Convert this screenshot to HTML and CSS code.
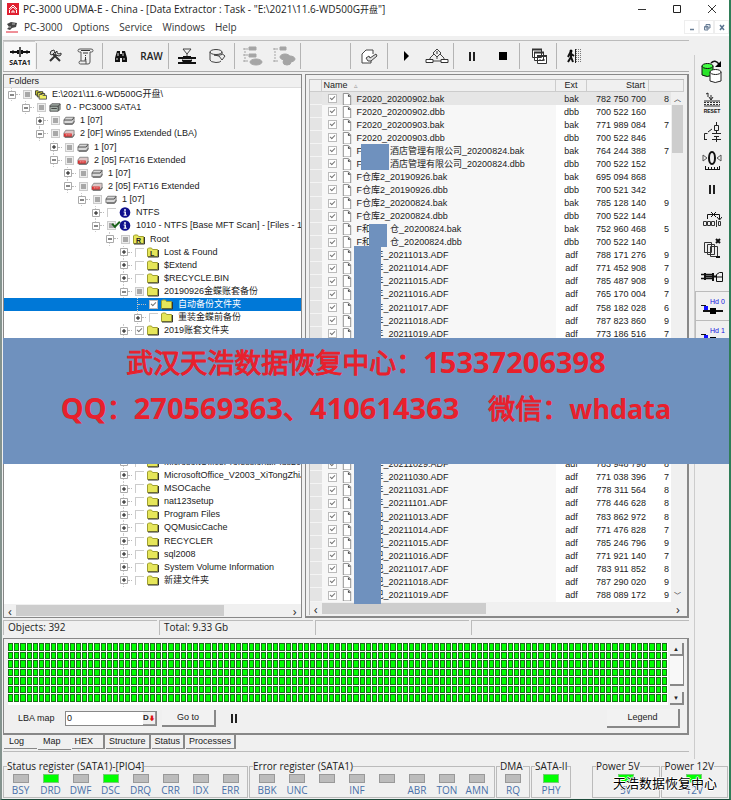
FILE: index.html
```html
<!DOCTYPE html>
<html lang="zh-CN">
<head>
<meta charset="utf-8">
<title>PC-3000 UDMA-E</title>
<link rel="stylesheet" href="styles.css">
</head>
<body>
<svg class="defs" aria-hidden="true">
  <symbol id="i-drive" viewBox="0 0 13 9"><path d="M1 4 3 1h9v4l-2 3H1z" fill="#d8d8d8" stroke="#777"/><path d="M1 4h9l2-3M2 8.5h8.5l2-3" fill="none" stroke="#444"/></symbol>
  <symbol id="i-disk" viewBox="0 0 13 10"><path d="M1 3 3 1h9v6l-2 2H1z" fill="#a9b5ad" stroke="#555"/><path d="M1 3.5h9v5M10 3.5l2-2M2.500 6h6" fill="none" stroke="#333"/></symbol>
  <symbol id="i-ext" viewBox="0 0 13 9"><path d="M1 4 3 1h9v4l-2 3H1z" fill="#dcc8c8" stroke="#888"/><path d="M1 4.500h8.500V8H1z" fill="#d83030"/><path d="M3 6h1m1 0h1m1 0h1" stroke="#fff"/><path d="M2 8.500h8.500l2-3" fill="none" stroke="#444"/></symbol>
  <symbol id="i-folder" viewBox="0 0 12 10"><path d="M.5 9V1.500L1.500.5h3l1 1.500h5V9z" fill="#e6e65a" stroke="#a0a030"/><path d="M1 9.500h10.500V2.500" fill="none" stroke="#333"/></symbol>
  <symbol id="i-stack" viewBox="0 0 13 11"><path d="M.5 6V1.500h3l1 1h4V7z" fill="#d8d830" stroke="#333"/><path d="M2.500 8V3.500h3l1 1h4V9z" fill="#e6e64a" stroke="#333"/><path d="M4.500 10.500V5.500h3l1 1h4v4z" fill="#f0f060" stroke="#555"/></symbol>
  <symbol id="i-info" viewBox="0 0 12 12"><circle cx="6" cy="6" r="5.800" fill="#10108c"/><path d="M5 2.500h2v1.500H5zM4.500 5H7v3.500h1v1H4.500v-1h1V6h-1z" fill="#fff"/></symbol>
  <symbol id="i-doc" viewBox="0 0 10 13"><path d="M1 .5h5.500L9 3v10H1z" fill="#fff" stroke="#888"/><path d="M6 1v3h3z" fill="#444"/></symbol>
</svg>
<div class="app">
  <header class="titlebar">
    <svg class="logo" viewBox="0 0 12 12"><path d="M0 0h12v12H0z" fill="#e02030"/><path d="M2 6 6 2l4 4M2.500 10V7L6 4l3.500 3v3M5 10V8h2v2" fill="none" stroke="#fff"/></svg>
    <h1>PC-3000 UDMA-E - China - [Data Extractor : Task - "E:\2021\11.6-WD500G<span class="cjk10">开盘</span>"]</h1>
    <div class="winbtns">
      <button aria-label="Minimize"><svg viewBox="0 0 10 10"><path d="M1 5.500h8" stroke="#333" fill="none"/></svg></button>
      <button aria-label="Maximize"><svg viewBox="0 0 10 10"><path d="M1.500 1.500h7v7h-7z" stroke="#222" fill="none"/></svg></button>
      <button aria-label="Close"><svg viewBox="0 0 10 10"><path d="M1 1l8 8M9 1 1 9" stroke="#333" fill="none"/></svg></button>
    </div>
  </header>
  <nav class="menubar">
    <svg class="logo" viewBox="0 0 12 12"><path d="M1 3 5 1l6 1-1 4-4 1-2 2-3-1 2-2z" fill="#444"/><path d="M6 3h3M3 6h2" stroke="#bbb"/><path d="M0 11h12" stroke="#e02030"/></svg>
    <a href="#">PC-3000</a><a href="#">Options</a><a href="#">Service</a><a href="#">Windows</a><a href="#">Help</a>
    <div class="mdibtns">
      <button aria-label="Minimize child"><svg viewBox="0 0 8 8"><path d="M2 6.500h4" stroke="#6a7f96" stroke-width="1.500"/></svg></button>
      <button aria-label="Restore child"><svg viewBox="0 0 8 8"><path d="M3 1.500h4V5H3zM1.500 3.500H5V7H1.500z" fill="#dde5ee" stroke="#6a7f96"/></svg></button>
      <button aria-label="Close child"><svg viewBox="0 0 8 8"><path d="M2 2l4 5M6 2 2 7" stroke="#5a7390" stroke-width="1.500"/></svg></button>
    </div>
  </nav>

  <div class="body">
    <main class="main">
      <div class="toolbar">
        <button class="tool pressed" aria-label="SATA1"><svg width="24" height="20" viewBox="0 0 24 20"><path d="M2 5h20" stroke="#111" stroke-width="2"/><path d="M5 3v4M19 3v4M9 3.500h6M9 6.500h6" stroke="#111"/><path d="M12 0v10" stroke="#555" stroke-width="2"/><text x="12" y="18" class="ico-sata">SATA1</text></svg></button>
        <i class="sep"></i>
        <button class="tool" aria-label="Tools"><svg width="14" height="14" viewBox="0 0 14 14"><path d="M2 12 9 5M12 12 5 5" stroke="#333" stroke-width="2"/><path d="M2 5l1-3 3-1 1 2-3 3zM9 2v2l2 1 2-1v2l-2 1-3-1-1-2z" fill="#ddd" stroke="#333"/></svg></button>
        <button class="tool" aria-label="Script"><svg width="17" height="17" viewBox="0 0 17 17"><path d="M4 4H2.500Q1 4 1 2.500T3 1h11q2 0 2 1.500T14.500 4H13v10q0 2-2 2H3.500Q2 16 2 14.500T3.500 13H4V4zM4 13h5v3" fill="none" stroke="#555"/><path d="M4 2.500h9M6 5h5M8.500 7v1m0 1v3m-1 0h2" stroke="#333"/></svg></button>
        <i class="sep"></i>
        <button class="tool" aria-label="Find"><svg width="14" height="13" viewBox="0 0 14 13"><path d="M3 1h3v3h2V1h3l2 7v4H8V8H6v4H1V8z" fill="#111"/><path d="M4 3v3M9 3v3M3 8v2M10 8v2" stroke="#ddd"/></svg></button>
        <button class="tool raw">RAW</button>
        <i class="sep"></i>
        <button class="tool" aria-label="Connect"><svg width="18" height="16" viewBox="0 0 18 16"><path d="M5 1h8L9 6zM9 6v3" fill="none" stroke="#444"/><path d="M0 10h18M4 12.500h10M0 15h18" stroke="#111" stroke-width="2"/><path d="M5 8h8v8H5z" fill="#111"/><path d="M5 11.500h8" stroke="#ccc"/></svg></button>
        <button class="tool" aria-label="Save disk"><svg width="17" height="14" viewBox="0 0 17 14"><ellipse cx="7" cy="3" rx="6" ry="2.500" fill="none" stroke="#444"/><path d="M1 3v8q0 2 6 2.500 4 0 5-1.500M13 3v2" fill="none" stroke="#444"/><path d="M5 6h6q3-2 5 1l-3 4-3-4z" fill="#eee" stroke="#444"/></svg></button>
        <i class="sep"></i>
        <button class="tool" aria-label="Tree"><svg width="21" height="20" viewBox="0 0 21 20"><g fill="#a5a5a5" stroke="#a5a5a5"><path d="M3 2v14M1 3h5M1 9h5M1 15h6" stroke-dasharray="2 1"/><path d="M7 1h7v3H7zM7 8h7v3H7z"/><ellipse cx="14" cy="16" rx="6" ry="3"/></g></svg></button>
        <button class="tool" aria-label="Tree groups"><svg width="24" height="20" viewBox="0 0 24 20"><g fill="#a5a5a5" stroke="#a5a5a5"><path d="M3 2v14M1 3h6M1 15h6" stroke-dasharray="2 1"/><path d="M8 1h6v3H8z"/><ellipse cx="13" cy="11" rx="5" ry="3"/><ellipse cx="18" cy="13" rx="5" ry="3"/><ellipse cx="15" cy="16" rx="4" ry="3"/></g></svg></button>
        <i class="sep"></i>
        <span class="gap"></span>
        <i class="sep"></i>
        <button class="tool single" aria-label="Check page"><svg width="17" height="15" viewBox="0 0 17 15"><path d="M10 11v3H1V5l4-4h7v4" fill="#fff" stroke="#444"/><path d="M5 9l3-2 1 2 6-4 1 2-6 5H7z" fill="#ddd" stroke="#444"/></svg></button>
        <i class="sep"></i>
        <button class="tool" aria-label="Run"><svg width="6" height="10" viewBox="0 0 6 10"><path d="M1 0 6 5 1 10z" fill="#000"/></svg></button>
        <button class="tool" aria-label="Flow"><svg width="24" height="16" viewBox="0 0 24 16"><path d="M12 1l4 4-4 4-4-4zM12 9v2M9 6l-4 4M15 6l4 4M5 10v2M19 10v2M8 13h8" fill="none" stroke="#444"/><path d="M1 11.500h7v3H1zM16 11.500h7v3h-7z" fill="#fff" stroke="#333"/><path d="M12 3v3" stroke="#333"/></svg></button>
        <i class="sep"></i>
        <button class="tool" aria-label="Pause"><svg width="8" height="9" viewBox="0 0 8 9"><path d="M1 0h2v9H1zM5 0h2v9H5z" fill="#222"/></svg></button>
        <button class="tool" aria-label="Stop"><svg width="8" height="8" viewBox="0 0 8 8"><path d="M0 0h8v8H0z" fill="#000"/></svg></button>
        <i class="sep"></i>
        <button class="tool single" aria-label="Windows"><svg width="16" height="16" viewBox="0 0 16 16"><g fill="#fff" stroke="#333"><path d="M1.500 1.500h9v8h-9zM3.500 4.500h9v8h-9zM6.500 7.500h9v8h-9z"/><path d="M1 1.500h10M3 4.500h10M6 8h10" stroke-width="2"/><path d="M8 12h2m1 0h3"/></g></svg></button>
        <i class="sep"></i>
        <button class="tool" aria-label="Exit"><svg width="15" height="14" viewBox="0 0 15 14"><circle cx="4" cy="2" r="1.500"/><path d="M4 3v5l2 5M4 8l-3 5M1 8l2-4 4 3" fill="none" stroke="#111" stroke-width="2"/><path d="M9.500 0v14M11.500 0v14M13.500 0v14" stroke="#777" stroke-dasharray="1 1"/><path d="M8.500 0v14" stroke="#222"/></svg></button>
      </div>

      <div class="panels">
        <section class="folders">
          <h2>Folders</h2>
          <div class="tree" id="tree"></div>
          <div class="hbar"><b>‹</b><i class="thumb-tree"></i><b>›</b></div>
        </section>
        <section class="files">
          <div class="files-inner">
            <div class="files-view">
              <table>
                <colgroup><col class="c-gut"><col class="c-name"><col class="c-ext"><col class="c-start"><col class="c-more"></colgroup>
                <thead><tr><th></th><th class="h-name">Name <span class="sort">▵</span></th><th>Ext</th><th class="num">Start</th><th></th></tr></thead>
                <tbody id="rows"></tbody>
              </table>
              <div class="vbar"><b>︿</b><i></i><b>﹀</b></div>
              <div class="mask mask-a"></div><div class="mask mask-b"></div><div class="mask mask-c"></div>
            </div>
            <div class="hbar"><b>‹</b><i class="thumb-files"></i><b>›</b></div>
          </div>
        </section>
      </div>

      <div class="statusbar"><span class="s1">Objects: 392</span><span class="s2">Total: 9.33 Gb</span><span class="s3"></span><span class="s4"></span></div>

      <section class="map">
        <div class="map-top">
          <div class="cells" id="cells"></div>
          <div class="classic"><button aria-label="Up">▲</button><i></i><button aria-label="Down">▼</button></div>
        </div>
        <div class="map-controls">
          <label for="lba">LBA map</label>
          <div class="lba"><input id="lba" type="text" value="0"><button aria-label="Decimal"><b>D</b><em>⬇</em></button></div>
          <button class="btn goto">Go to</button>
          <svg width="6" height="9" viewBox="0 0 6 9"><path d="M0 0h2v9H0zM4 0h2v9H4z" fill="#222"/></svg>
          <button class="btn legend">Legend</button>
        </div>
      </section>
      <div class="tabs"><button>Log</button><button class="on">Map</button><button>HEX</button><button>Structure</button><button>Status</button><button>Processes</button></div>
      <div class="footline"></div>
    </main>

    <aside class="side">
      <button aria-label="Copy disk"><svg width="22" height="26" viewBox="0 0 22 26"><path d="M1 7v9q5 3 11 0V7" fill="#28e428" stroke="#111"/><ellipse cx="6.500" cy="7" rx="5.500" ry="2.500" fill="#4f4" stroke="#111"/><path d="M9 13v9q5 3 11 0v-9" fill="#fff" stroke="#222"/><ellipse cx="14.500" cy="13" rx="5.500" ry="2.500" fill="#fff" stroke="#222"/><path d="M10 4q4-4 8 1" fill="none" stroke="#111" stroke-width="1.500"/><path d="M20 2v6h-6z"/></svg></button>
      <button aria-label="Reset"><svg width="18" height="22" viewBox="0 0 18 22"><path d="M3 2l2-1v4M8 3v4M6 5l2 3 2-3" fill="none" stroke="#222"/><path d="M1 9h16M1 14h16" stroke="#333"/><path d="M1 10.500h16M1 12.500h16" stroke="#333" stroke-dasharray="2 1"/><text x="9" y="21" class="ico-reset">RESET</text></svg></button>
      <button aria-label="Power switch"><svg width="18" height="20" viewBox="0 0 18 20"><path d="M1.500 18v-6.500h3M5 10l4-3M13.500 0v3M11.500 3.500h4v5h-4zM13.500 9v2M9 11.500h9M11 14.500h5M9 17.500h9M13.500 15v5M1 17.500h3" fill="none" stroke="#222"/></svg></button>
      <button aria-label="Zero"><svg width="20" height="22" viewBox="0 0 20 22"><ellipse cx="10" cy="8" rx="3" ry="6" fill="none" stroke="#111" stroke-width="2"/><path d="M1 5l4 3-4 3zM19 5l-4 3 4 3z" fill="none" stroke="#555"/><path d="M3 19.500h15M3.500 16v4M6.500 17v3M9.500 17v3M12.500 17v3M15.500 17v3M17.500 16v4" stroke="#111"/></svg></button>
      <button aria-label="Pause device"><svg width="6" height="9" viewBox="0 0 6 9"><path d="M0 0h2v9H0zM4 0h2v9H4z" fill="#222"/></svg></button>
      <button aria-label="Skip sector"><svg width="20" height="16" viewBox="0 0 20 16"><path d="M5.500 8V3.500h12V8M15 6l2.500 3L20 6M9 1l5 5M14 1 9 6" fill="none" stroke="#111"/><path d="M1.500 10.500h3v4h-3zM5.500 10.500h3v4h-3zM9.500 10.500h3v4h-3zM14.500 9v7M16.500 10.500h2v4h-2z" fill="none" stroke="#333"/></svg></button>
      <button aria-label="Close copies"><svg width="18" height="20" viewBox="0 0 18 20"><g fill="#eee" stroke="#333"><path d="M1.500 4.500h7v10h-7zM4.500 6.500h7v10h-7zM7.500 8.500h7v10h-7z"/></g><path d="M13 1l4 4M17 1l-4 4M13 19h4" stroke="#111" stroke-width="2"/></svg></button>
      <button aria-label="Connector"><svg width="22" height="11" viewBox="0 0 22 11"><path d="M0 3.500h12M0 7.500h12" stroke="#111" stroke-width="1.500"/><path d="M3 5.500h12" stroke="#111" stroke-width="2"/><path d="M4 2v7M12 2v8" stroke="#111" stroke-width="2"/><path d="M15.500 3.500l3-2h3v9h-6zM16 6h5" fill="none" stroke="#111"/></svg></button>
      <button class="head" aria-label="Head 0"><svg width="24" height="18" viewBox="0 0 24 18"><text x="9" y="7" class="ico-hd">Hd 0</text><path d="M3 9h4v4H3z" fill="#11f"/><path d="M0 8.500h5" stroke="#111"/><path d="M2 14h20" stroke="#111" stroke-width="2"/><path d="M9 11h6v6H9z"/></svg></button>
      <button class="head" aria-label="Head 1"><svg width="24" height="18" viewBox="0 0 24 18"><text x="9" y="7" class="ico-hd">Hd 1</text><path d="M3 9h4v4H3z" fill="#11f"/><path d="M0 8.500h5" stroke="#111"/><path d="M2 14h20" stroke="#111" stroke-width="2"/><path d="M9 11h6v6H9z"/></svg></button>
    </aside>
  </div>

  <footer class="registers" id="registers"></footer>

  <div class="banner">
    <p>武汉天浩数据恢复中心：<span>15337206398</span></p>
    <p><span>QQ</span>：<span>270569363</span>、<span>410614363</span><i></i>微信：<span class="id">whdata</span></p>
  </div>
  <div class="watermark">天浩数据恢复中心</div>
</div>
<script src="app.js"></script>
</body>
</html>
```
FILE: styles.css
```css
* { box-sizing: border-box; }
body { margin: 0; font: 9px/13px "Liberation Sans", "Noto Sans CJK SC", sans-serif; color: #222; }
button, input { font: inherit; color: inherit; margin: 0; padding: 0; border: 0; background: none; border-radius: 0; }
p, h1, h2 { margin: 0; font-weight: 400; font-size: inherit; }
.defs { display: none; }
svg { display: block; flex: none; }
.cjk { font: 9px/12px "Noto Sans CJK SC", sans-serif; }
.cjk10 { font-size: 9px; }

.app { position: relative; display: flex; flex-direction: column; height: 100vh; min-height: 780px; background: #f0f0f0; border-left: 2px solid #84938e; border-right: 2px solid #2f7d57; border-bottom: 1px solid #1d4a3a; overflow: hidden; }
.titlebar, .menubar, .statusbar, .registers { font-family: "Open Sans", "Noto Sans CJK SC", sans-serif; font-size: 10px; }
.titlebar { display: flex; align-items: center; height: 18px; padding-left: 5px; background: #fff; }
.titlebar h1 { margin-left: 4px; white-space: nowrap; }
.logo { width: 12px; height: 12px; }
.winbtns { display: flex; gap: 25px; margin-left: auto; padding-right: 12px; }
.winbtns svg { width: 10px; height: 10px; }
.menubar { display: flex; align-items: center; height: 18px; padding-left: 4px; background: #fff; }
.menubar a { margin: 0 0 0 10px; color: #333; text-decoration: none; }
.menubar .logo + a { margin-left: 6px; }
.mdibtns { display: flex; margin-left: auto; }
.mdibtns button { width: 15px; height: 14px; display: grid; place-items: center; border: 1px solid #eee; }
.mdibtns svg { width: 8px; height: 8px; }

.body { flex: 1; display: flex; min-height: 0; }
.main { flex: 1; min-width: 0; display: flex; flex-direction: column; padding: 4px 0 0 1px; }
.toolbar { display: flex; height: 32px; border-top: 1px solid #bbb; border-bottom: 1px solid #aaa; }
.tool { display: grid; place-items: center; width: 31px; }
.tool.single { width: 33px; }
.tool.pressed { width: 32px; background: #f8f8f8; border: 1px solid #ccc; border-width: 1px 0 0 1px; }
.sep { width: 1px; margin: 2px 2px 2px 1px; background: #b4b4b4; }
.gap { width: 46px; }
.raw { font: 600 10px/13px "Open Sans", sans-serif; }
.ico-sata { font: 700 7px "Open Sans", sans-serif; text-anchor: middle; fill: #222; }
.ico-reset { font: 700 5px "Liberation Sans", sans-serif; text-anchor: middle; fill: #111; }
.ico-hd { font: 7px "Liberation Sans", sans-serif; fill: #11d; }

.panels { flex: 1; display: flex; gap: 3px; min-height: 0; padding-top: 2px; }
.folders { flex: 79 1 0; min-width: 0; display: flex; flex-direction: column; padding: 0; border: 1px solid #888; }
.folders h2 { height: 13px; padding-left: 5px; border-bottom: 1px solid #ddd; }
.tree { flex: 1; min-height: 0; display: grid; grid-auto-rows: 1fr; padding-bottom: 17px; background: #fff; overflow: hidden; }
.row { display: flex; align-items: center; min-height: 0; white-space: nowrap; padding-left: 4px; }
.row.sel { background: #0078d7; color: #fff; }
.indent { flex: none; align-self: stretch; }
.exp { position: relative; flex: none; width: 15px; align-self: stretch; display: flex; align-items: center; }
.exp::before { content: ""; position: absolute; left: 3px; top: 0; bottom: 0; border-left: 1px dotted #ccc; }
.exp::after { content: ""; position: absolute; left: 8px; right: 3px; top: 6px; border-top: 1px dotted #bbb; }
.exp svg { position: relative; }
.exp.leaf::after { left: 4px; }
.chk { flex: none; width: 9px; height: 9px; margin: 0; appearance: none; border: 1px solid #ccc; border-width: 1px 0 0 1px; background: #fff; }
.chk.part { border: 1px solid #ccc; background: #a8a8a8; outline: 1px solid #eee; outline-offset: -2px; }
.chk.on { border: 1px solid #bbb; position: relative; }
.chk.on::after, .tick::after { content: ""; position: absolute; left: 1px; top: 1px; width: 4px; height: 2px; border: solid #777; border-width: 0 0 1px 1px; transform: rotate(-45deg); }
.chk.tick { position: relative; overflow: visible; }
.chk.tick::after { left: 4px; top: -1px; width: 6px; height: 3px; border-color: #186018; border-width: 0 0 2px 2px; }
.pic { position: relative; flex: none; width: 13px; margin: 0 4px 0 3px; }
.pic svg { width: 12px; height: 11px; }
.pic b { position: absolute; left: 3px; top: 2px; font: 700 7px/9px "Liberation Sans", sans-serif; }

.hbar { display: flex; align-items: center; height: 13px; background: #f0f0f0; }
.hbar b { flex: none; width: 12px; font: 13px/10px "Open Sans", sans-serif; text-align: center; color: #333; }
.hbar b:last-child { margin-left: auto; }
.hbar i { height: 11px; background: #cdcdcd; }
.thumb-tree { width: 70%; }
.thumb-files { width: 44%; }

.files { flex: 100 1 0; min-width: 0; padding: 4px 3px 1px 3px; border: solid #888; border-width: 1px 2px 2px 1px; }
.files-inner { height: 100%; display: flex; flex-direction: column; border: 1px solid #bbb; border-right: 0; border-bottom: 0; }
.files-view { position: relative; flex: 1; min-height: 0; display: flex; }
table { flex: 1; height: 100%; table-layout: fixed; border-collapse: separate; border-spacing: 0; width: 100%; }
.c-gut { width: 12px; } .c-ext { width: 31px; } .c-start { width: 62px; } .c-more { width: 35px; }
th, td { padding: 0; height: 13px; line-height: 12px; font-weight: 400; text-align: center; white-space: nowrap; overflow: hidden; }
th { height: 12px; line-height: 11px; background: #f0f0f0; border-right: 1px solid #ccc; border-bottom: 1px solid #ccc; }
th.h-name { text-align: left; padding-left: 2px; }
.sort { margin-left: 4px; color: #999; font-size: 7px; }
.num { text-align: right; padding-right: 3px; }
td { background: #fff; }
td:first-child { background: #e4e4e4; border-bottom: 1px solid #f4f4f4; }
td:last-child { text-align: right; padding-right: 15px; }
td .cell { display: flex; align-items: center; height: 12px; padding-left: 6px; }
tbody td:nth-child(2) { background: #f7f7f7; }
tbody tr:first-child td:not(:first-child) { background: #e6e6e6; }
.cell .chk { margin-right: 5px; }
.cell svg { width: 10px; height: 12px; margin-right: 5px; }
.cell u { display: inline-block; }
.u-a { width: 28px; } .u-b { width: 19px; } .u-c { width: 18px; }
.vbar { position: absolute; right: 0; top: 12px; bottom: 0; width: 13px; display: flex; flex-direction: column; background: #f0f0f0; }
.vbar b { height: 13px; font: 7px/13px "Noto Sans CJK SC", sans-serif; text-align: center; }
.vbar i { height: 48px; margin: 0 1px; background: #cdcdcd; }
.vbar b:last-child { margin-top: auto; }
.mask { position: absolute; background: #6f91be; }
.mask-a { left: 51px; top: 64px; width: 28px; height: 26px; }
.mask-b { left: 59px; top: 144px; width: 18px; height: 23px; }
.mask-c { left: 44px; top: 166px; width: 27px; bottom: -2px; z-index: 1; }

.statusbar { display: flex; height: 15px; margin-top: 2px; gap: 2px; line-height: 12px; }
.statusbar span { border: solid #bbb; border-width: 1px 0 0 1px; padding-left: 4px; }
.s1, .s2, .s3 { flex: 154; } .s4 { flex: 220; }

.map { margin-top: 3px; border: solid #888; border-width: 1px 2px 2px 1px; padding: 4px 0 6px 4px; }
.map-top { display: flex; gap: 2px; height: 62px; }
.cells { flex: 1; display: grid; grid-template-columns: repeat(107, 1fr); grid-auto-rows: 1fr; background: #fff; padding-bottom: 2px; }
.cells i { margin: 0 1px 1px 0; background: #0f0; border: 1px solid #177017; }
.classic { width: 14px; display: flex; flex-direction: column; margin-right: 3px; }
.classic button { height: 13px; font-size: 6px; line-height: 10px; background: #f0f0f0; border: solid #888; border-width: 0 2px 2px 0; }
.classic i { flex: 1; margin-bottom: 6px; background: #f8f8f8; border: solid #888; border-width: 0 1px 2px 0; }
.map-controls { display: flex; align-items: center; height: 17px; margin-top: 5px; padding: 0 7px 0 10px; }
.map-controls label { width: 47px; }
.lba { display: flex; width: 92px; height: 15px; border: 1px solid #888; background: #fff; }
.lba input { flex: 1; min-width: 0; padding-left: 1px; }
.lba button { width: 13px; font: 700 8px/11px "Liberation Sans", sans-serif; background: #f0f0f0; border: solid #999; border-width: 0 1px 1px 0; }
.lba em { color: #d11; font-style: normal; font-size: 6px; }
.btn { height: 17px; border: solid #888; border-width: 0 2px 2px 0; background: #f2f2f2; }
.goto { width: 54px; margin: 0 15px 0 5px; }
.legend { width: 73px; height: 19px; margin-left: auto; }
.tabs { display: flex; height: 16px; padding-left: 1px; align-items: flex-start; }
.tabs button { height: 14px; padding: 0 3px; border: solid #888; border-width: 0 2px 1px 0; margin-right: 1px; }
.tabs .on { height: 16px; padding: 0 10px 0 5px; border-right: 0; margin-top: -1px; }
.tabs button:first-child { padding-left: 5px; padding-right: 13px; border-right: 0; }
.tabs button:nth-child(3) { padding-right: 10px; }
.footline { height: 8px; border-top: 1px solid #bbb; }

.side { width: 35px; margin: 19px 0 0 5px; border-left: 1px solid #ccc; display: flex; flex-direction: column; overflow: hidden; }
.side button { display: grid; place-items: center; height: 29px; flex: none; }
.side button:nth-child(1) { height: 33px; }
.side .head { border: solid #bbb; border-width: 1px 0 0 1px; }

.registers { display: flex; padding: 1px 0 1px 1px; }
.registers fieldset { display: flex; flex: none; min-width: 0; height: 38px; margin: 0 1px 0 0; padding: 0; border: 1px solid #bbb; justify-content: center; }
.registers legend { margin-left: 3px; padding: 0; line-height: 12px; height: 12px; white-space: nowrap; }
.w-status { width: 245px; } .w-error { width: 246px; } .w-dma { width: 34px; } .w-sata { width: 40px; }
.registers .w-5, .registers .w-12 { flex: 1; }
.registers .w-5 { margin-left: 20px; }
.led { width: 30px; text-align: center; color: #4a70a8; line-height: 12px; }
.led i { display: block; width: 16px; height: 9px; margin: 2px auto 1px; background: #bcbcbc; border: 1px solid #999; }
.led i.lit { background: #0f0; border-color: #7c7; }

.banner { position: absolute; z-index: 2; left: 1px; right: 0; top: 338px; height: 126px; padding-top: 6px; background: #6f91be; color: #e8202c; font: 700 27px/36px "Noto Sans CJK SC", sans-serif; -webkit-text-stroke: 1px #e8202c; white-space: nowrap; }
.banner p { height: 46px; text-align: center; }
.banner span { font: 700 29px/36px "Noto Sans", sans-serif; -webkit-text-stroke: 0; }
.banner .id { font-size: 27px; }
.banner i { display: inline-block; width: 29px; }
.watermark { position: absolute; right: 12px; bottom: 6px; font: 13px/20px "Noto Sans CJK SC", sans-serif; color: #000; text-shadow: 1px 0 #fff, -1px 0 #fff, 0 1px #fff, 0 -1px #fff; }
```
FILE: app.js
```js
const wrapCjk = s => s.replace(/&/g, '&amp;').replace(/[\u4e00-\u9fff]+/g, m => `<span class="cjk">${m}</span>`);
const use = id => `<svg><use href="#i-${id}"></use></svg>`;

// [level, expander, checkbox, icon, text, badge]
const F = (name, level = 8, exp = '+', chk = '') => [level, exp, chk, 'folder', name];
const tree = [
  [0, '-', 'part', 'stack', 'E:\\2021\\11.6-WD500G开盘\\'],
  [1, '-', 'part', 'disk', '0 - PC3000 SATA1'],
  [2, '+', 'part', 'drive', '1 [07]'],
  [2, '-', 'part', 'ext', '2 [0F] Win95 Extended  (LBA)'],
  [3, '+', 'part', 'drive', '1 [07]'],
  [3, '-', 'part', 'ext', '2 [05] FAT16 Extended'],
  [4, '+', 'part', 'drive', '1 [07]'],
  [4, '-', 'part', 'ext', '2 [05] FAT16 Extended'],
  [5, '-', 'part', 'drive', '1 [07]'],
  [6, '+', '', 'info', 'NTFS'],
  [6, '-', 'part tick', 'info', '1010 - NTFS [Base MFT Scan] - [Files - 1223'],
  [7, '-', 'part', 'folder', 'Root', 'R'],
  [8, '+', '', 'folder', 'Lost & Found', 'L'],
  F('$Extend'), F('$RECYCLE.BIN'), F('20190926金蝶账套备份', 8, '-', 'part'),
  F('自动备份文件夹', 9, '', 'on'), F('重装金蝶前备份', 9), F('2019账套文件夹', 8, '+', 'on'),
  ...Array(9).fill(null),
  F('MicrosoftOfficeProfessionalPlus2007'), F('MicrosoftOffice_V2003_XiTongZhiJia'), F('MSOCache'),
  F('nat123setup'), F('Program Files'), F('QQMusicCache'), F('RECYCLER'), F('sql2008'),
  F('System Volume Information'), F('新建文件夹')
];
document.getElementById('tree').innerHTML = tree.map((r, i) => {
  if (!r) return '<div class="row"></div>';
  const [lv, exp, chk, icon, text, badge] = r;
  const box = exp ? `<svg width="8" height="8" viewBox="0 0 8 8"><path d="M.5.5h7v7h-7z" fill="#fff" stroke="#aaa"/><path d="M2 4h4${exp === '+' ? 'M4 2v4' : ''}" stroke="#111"/></svg>` : '';
  return `<div class="row${i === 16 ? ' sel' : ''}"><span class="indent" style="width:${lv * 14}px"></span>` +
    `<span class="exp${exp ? '' : ' leaf'}">${box}</span><input type="checkbox" class="chk ${chk}" aria-label="${text.replace(/&/g, '&amp;')}">` +
    `<span class="pic">${use(icon)}${badge ? `<b>${badge}</b>` : ''}</span><span>${wrapCjk(text)}</span></div>`;
}).join('');

const files = [
  ['F2020_20200902.bak', '782 750 700', 8], ['F2020_20200902.dbb', '700 522 160', ''],
  ['F2020_20200903.bak', '771 989 084', 7], ['F2020_20200903.dbb', '700 522 846', ''],
  ['F{a}酒店管理有限公司_20200824.bak', '764 244 388', 7], ['F{a}酒店管理有限公司_20200824.dbb', '700 522 152', ''],
  ['F仓库2_20190926.bak', '695 094 868', ''], ['F仓库2_20190926.dbb', '700 521 342', ''],
  ['F仓库2_20200824.bak', '785 128 140', 9], ['F仓库2_20200824.dbb', '700 522 144', ''],
  ['F和{b}仓_20200824.bak', '752 960 468', 5], ['F和{b}仓_20200824.dbb', '700 522 140', '']
];
const adf = (glyph, list) => list.forEach(([d, start, more]) => files.push([d ? `{c}${glyph}_2021${d}.ADF` : '', start, more]));
adf('年', [['1013', '788 171 276', 9], ['1014', '771 452 908', 7], ['1015', '785 487 908', 9], ['1016', '765 170 004', 7],
  ['1017', '758 182 028', 6], ['1018', '787 823 860', 9], ['1019', '773 186 516', 7], ...Array(9).fill(['', '', '']),
  ['1029', '783 948 796', 8], ['1030', '771 038 396', 7], ['1031', '778 311 564', 8], ['1101', '778 446 628', 8]]);
adf('记', [['1013', '783 862 972', 8], ['1014', '771 476 828', 7], ['1015', '785 246 796', 9], ['1016', '771 921 140', 7],
  ['1017', '783 911 852', 8], ['1018', '787 290 020', 9], ['1019', '788 089 172', 9]]);
document.getElementById('rows').innerHTML = files.map(([name, start, more]) =>
  `<tr><td></td><td><div class="cell"><input type="checkbox" class="chk on" aria-label="select">${use('doc')}<span>${
    wrapCjk(name).replace(/\{(\w)\}/, '<u class="u-$1"></u>')}</span></div></td><td>${
    name ? (name.endsWith('ADF') ? 'adf' : name.slice(-3)) : ''}</td><td class="num">${start}</td><td>${more}</td></tr>`).join('');

document.getElementById('cells').innerHTML = '<i></i>'.repeat(107 * 7);

const regs = [
  ['w-status', 'Status register (SATA1)-[PIO4]', ['BSY', '*DRD', 'DWF', '*DSC', 'DRQ', 'CRR', 'IDX', 'ERR']],
  ['w-error', 'Error register (SATA1)', ['BBK', 'UNC', '', 'INF', '', 'ABR', 'TON', 'AMN']],
  ['w-dma', 'DMA', ['RQ']], ['w-sata', 'SATA-II', ['*PHY']],
  ['w-5', 'Power 5V', ['*5V']], ['w-12', 'Power 12V', ['*12V']]
];
document.getElementById('registers').innerHTML = regs.map(([cls, title, leds]) =>
  `<fieldset class="${cls}"><legend>${title}</legend>${leds.map(l =>
    `<div class="led"><i class="${l[0] === '*' ? 'lit' : ''}"></i>${l.replace('*', '')}</div>`).join('')}</fieldset>`).join('');
```
